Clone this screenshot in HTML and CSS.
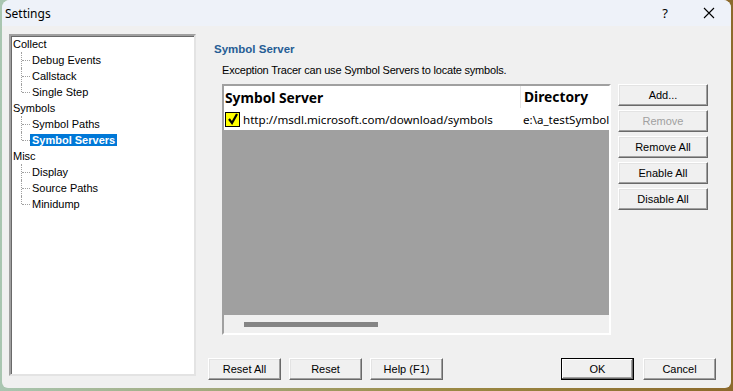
FILE: index.html
```html
<!DOCTYPE html>
<html lang="en">
<head>
    <meta charset="UTF-8">
    <meta name="viewport" content="width=device-width, initial-scale=1.0">
    <title>Settings</title>
    <link rel="stylesheet" href="styles.css">
</head>
<body>
    <div class="window">
        <div class="titlebar">
            <span class="title">Settings</span>
            <span class="caption-btn help">?</span>
            <span class="caption-btn close">
                <svg width="12" height="12" viewBox="0 0 12 12"><path d="M1 1 L11 11 M11 1 L1 11" stroke="#000" stroke-width="1.1" fill="none"/></svg>
            </span>
        </div>
        <div class="client">
            <ul class="tree">
                <li>Collect
                    <ul>
                        <li>Debug Events</li>
                        <li>Callstack</li>
                        <li>Single Step</li>
                    </ul>
                </li>
                <li>Symbols
                    <ul>
                        <li>Symbol Paths</li>
                        <li><span class="selected">Symbol Servers</span></li>
                    </ul>
                </li>
                <li>Misc
                    <ul>
                        <li>Display</li>
                        <li>Source Paths</li>
                        <li>Minidump</li>
                    </ul>
                </li>
            </ul>
            <div class="side">
                <section class="page">
                    <h2>Symbol Server</h2>
                    <p class="desc">Exception Tracer can use Symbol Servers to locate symbols.</p>
                    <div class="page-body">
                        <div class="listview">
                            <div class="lv-header">
                                <div class="col col-server">Symbol Server</div>
                                <div class="col col-dir">Directory</div>
                            </div>
                            <div class="lv-row">
                                <div class="col col-server">
                                    <span class="check">
                                        <svg width="12" height="12" viewBox="0 0 12 12"><path d="M2 6 L5 10 L10 1" stroke="#000" stroke-width="2.2" fill="none"/></svg>
                                    </span>
                                    http://msdl.microsoft.com/download/symbols
                                </div>
                                <div class="col col-dir">e:\a_testSymbols</div>
                            </div>
                            <div class="lv-empty"></div>
                            <div class="hscroll"><div class="thumb"></div></div>
                        </div>
                        <div class="actions">
                            <button>Add...</button>
                            <button disabled>Remove</button>
                            <button>Remove All</button>
                            <button>Enable All</button>
                            <button>Disable All</button>
                        </div>
                    </div>
                </section>
                <footer class="footer">
                    <button>Reset All</button>
                    <button>Reset</button>
                    <button>Help (F1)</button>
                    <span class="spacer"></span>
                    <button class="default">OK</button>
                    <button>Cancel</button>
                </footer>
            </div>
        </div>
    </div>
</body>
</html>
```

FILE: styles.css
```css
body {
    margin: 0;
    width: 733px;
    height: 391px;
    overflow: hidden;
    background: linear-gradient(90deg, #a9c6b1 0%, #9b8a45 60%, #8c6a2c 100%);
    font-family: "Liberation Sans", Arial, sans-serif;
    font-size: 11px;
    color: #000;
}

.window {
    margin-left: 2px;
    width: 729px;
    height: 388px;
    background-color: #f0f0f0;
    border-radius: 8px 8px 6px 6px;
    overflow: hidden;
    display: flex;
    flex-direction: column;
}

.titlebar {
    height: 26px;
    background-color: #eef2f9;
    display: flex;
    align-items: center;
    font-family: "Noto Sans", sans-serif;
    font-size: 12px;
}

.title {
    margin-left: 3px;
    flex: 1;
}

.caption-btn {
    width: 44px;
    text-align: center;
}

.help {
    font-size: 13px;
}

.close {
    display: flex;
    justify-content: center;
}

.client {
    flex: 1;
    display: flex;
    padding: 8px 15px 8px 7px;
    gap: 12px;
}

/* tree */
.tree {
    list-style: none;
    margin: 0;
    padding: 0 0 0 2px;
    width: 181px;
    height: 338px;
    flex-shrink: 0;
    background: #fff;
    border: 2px solid;
    border-color: #a0a0a0 #e3e3e3 #e3e3e3 #a0a0a0;
    box-shadow: inset 1px 1px #696969;
    line-height: 16px;
}

.tree ul {
    list-style: none;
    margin: 0;
    padding: 0 0 0 19px;
}

.tree ul li {
    position: relative;
}

.tree ul li::before {
    content: "";
    position: absolute;
    left: -11px;
    top: 0;
    height: 16px;
    border-left: 1px dotted #a0a0a0;
}

.tree ul li:last-child::before {
    height: 8px;
}

.tree ul li::after {
    content: "";
    position: absolute;
    left: -10px;
    top: 8px;
    width: 8px;
    border-top: 1px dotted #a0a0a0;
}

.selected {
    background-color: #0078d7;
    color: #fff;
    font-weight: bold;
    padding: 0 2px;
    margin-left: -2px;
}

/* right side */
.side {
    flex: 1;
    display: flex;
    flex-direction: column;
}

.page {
    flex: 1;
}

.page h2 {
    margin: 7px 0 0 6px;
    font-size: 11.5px;
    line-height: 16px;
    color: #265d95;
}

.desc {
    margin: 5px 0 0 14px;
    line-height: 16px;
    letter-spacing: -0.2px;
}

.page-body {
    display: flex;
    gap: 7px;
    margin: 6px 0 0 14px;
}

.listview {
    width: 385px;
    height: 247px;
    flex-shrink: 0;
    border: 2px solid;
    border-color: #a0a0a0 #fff #fff #a0a0a0;
    box-shadow: inset 1px 1px #696969, inset -1px -1px #e3e3e3;
    display: flex;
    flex-direction: column;
    overflow: hidden;
    font-family: "Noto Sans", sans-serif;
    font-size: 11.6px;
}

.lv-header,
.lv-row {
    display: flex;
    height: 22px;
    align-items: center;
    background: #fff;
    white-space: nowrap;
}

.lv-header {
    font-weight: bold;
    font-size: 13.8px;
}

.col {
    overflow: hidden;
}

.col-server {
    width: 296px;
    padding-left: 1px;
    box-sizing: border-box;
    display: flex;
    align-items: center;
}

.col-dir {
    flex: 1;
    padding-left: 3px;
}

.lv-header .col-dir {
    border-left: 1px solid #e5e5e5;
    height: 22px;
    line-height: 22px;
}

.check {
    width: 13px;
    height: 13px;
    border: 1px solid #000;
    background: #ffff00;
    display: inline-flex;
    align-items: center;
    justify-content: center;
    margin-right: 3px;
}

.lv-empty {
    flex: 1;
    background: #a0a0a0;
}

.hscroll {
    height: 18px;
    background: #f0f0f0;
    position: relative;
}

.hscroll .thumb {
    position: absolute;
    left: 20px;
    top: 7px;
    width: 134px;
    height: 5px;
    background: #858585;
}

/* buttons */
button {
    font-family: "Liberation Sans", Arial, sans-serif;
    font-size: 11px;
    color: #000;
    height: 22px;
    padding: 0;
    background-color: #f0f0f0;
    border: 1px solid;
    border-color: #fff #696969 #696969 #fff;
    box-shadow: inset -1px -1px #a0a0a0, inset 1px 1px #e3e3e3;
}

button:disabled {
    color: #a0a0a0;
}

.actions {
    display: flex;
    flex-direction: column;
    gap: 4px;
}

.actions button {
    width: 90px;
}

.footer {
    display: flex;
    gap: 8px;
}

.footer button {
    width: 73px;
}

.spacer {
    flex: 1;
}

.footer .default {
    border-color: #000;
    box-shadow: inset -1px -1px #696969, inset 1px 1px #fff, inset -2px -2px #a0a0a0;
}

.footer .default + button {
    margin-left: 1px;
}
```
